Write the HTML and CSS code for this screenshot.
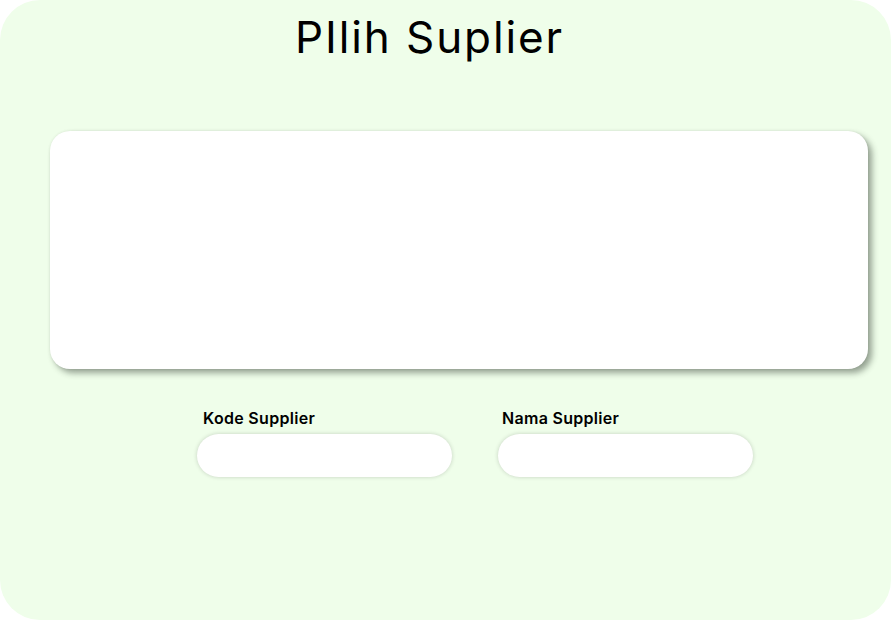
FILE: index.html
```html
<!DOCTYPE html>
<html lang="id">
<head>
<meta charset="utf-8">
<title>Pilih Suplier</title>
<link rel="stylesheet" href="styles.css">
</head>
<body>
<main class="panel">
  <h1 class="title">PIlih Suplier</h1>
  <section class="table-card"></section>
  <div class="fields">
    <label class="field">
      <span class="field-label">Kode Supplier</span>
      <input class="field-input" type="text">
    </label>
    <label class="field field-second">
      <span class="field-label">Nama Supplier</span>
      <input class="field-input" type="text">
    </label>
  </div>
</main>
</body>
</html>
```
FILE: styles.css
```css
* { box-sizing: border-box; }
html, body { margin: 0; padding: 0; background: #ffffff; }
body { width: 891px; height: 620px; overflow: hidden; font-family: Inter, "Noto Sans", sans-serif; }
.panel {
  width: 891px;
  height: 620px;
  background: #effeea;
  border-radius: 40px;
  display: flex;
  flex-direction: column;
  padding: 0 0 0 50px;
}
.title {
  margin: 9px 0 0 245px;
  font-weight: 400;
  font-size: 44px;
  line-height: 56px;
  color: #000;
  letter-spacing: 1.9px;
}
.table-card {
  margin-top: 66px;
  width: 818px;
  height: 238px;
  background: #fff;
  border-radius: 20px;
  box-shadow: 4px 4px 6px rgba(40, 50, 40, 0.45), 0 0 3px rgba(0,0,0,0.08);
}
.fields {
  display: flex;
  gap: 46px;
  margin: 39px 0 0 147px;
}
.field { display: flex; flex-direction: column; gap: 6px; }
.field-label {
  font-weight: 600;
  font-size: 16px;
  line-height: 20px;
  color: #000;
  padding-left: 6px;
  letter-spacing: 0.3px;
}
.field-second .field-label { padding-left: 4px; }
.field-input {
  width: 255px;
  height: 43px;
  border: none;
  border-radius: 22px;
  background: #fff;
  box-shadow: 0 0 4px rgba(0, 0, 0, 0.18);
  outline: none;
}
```
